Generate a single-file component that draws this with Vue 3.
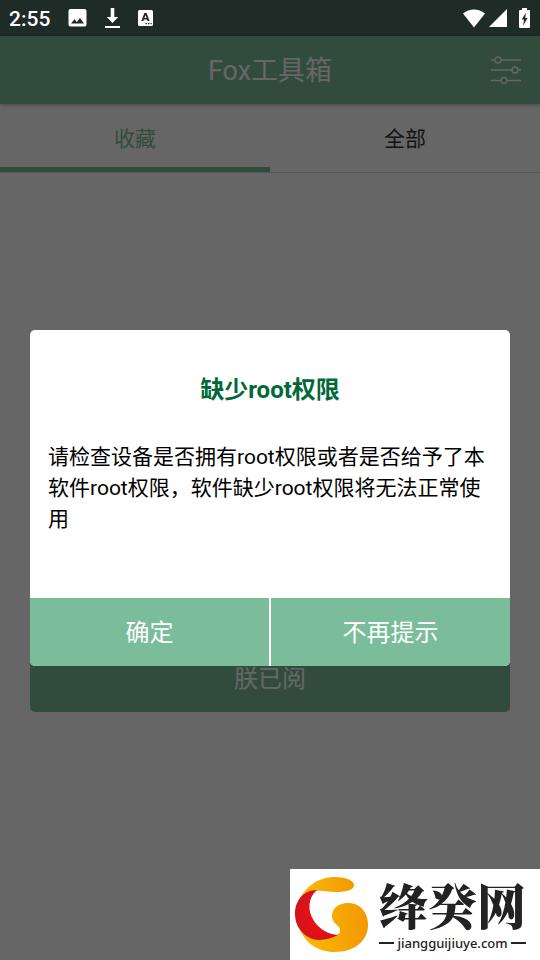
<template>
  <div class="screen">
    <div class="status-bar">
      <span class="clock">2:55</span>
      <svg class="status-icon" width="19" height="18" viewBox="0 0 19 18" aria-hidden="true">
        <path fill="#fff" fill-rule="evenodd" d="M2.500 0h14a2 2 0 0 1 2 2v13.500a2 2 0 0 1-2 2h-14a2 2 0 0 1-2-2V2a2 2 0 0 1 2-2zM3 14.500h13l-4-5.500-3.200 4L6.500 10.300z" />
      </svg>
      <svg class="status-icon" width="17" height="21" viewBox="0 0 17 21" aria-hidden="true">
        <path fill="#fff" d="M6.700 0h3.600v9h4L8.500 15 2.700 9h4zM1 18h15v2H1z" />
      </svg>
      <svg class="status-icon" width="16" height="18" viewBox="0 0 16 18" aria-hidden="true">
        <rect x="0" y="1" width="15" height="16" rx="1.500" fill="#fff" />
        <path fill="#1f2b26" fill-rule="evenodd" d="M6.400 4h2.200l3 8h-2L9 10.400H5.900L5.300 12h-2zM7.500 6.200 6.400 9h2.200zM7.500 14H9v1.300H7.500zM10 14h1.500v1.300H10zM12.500 14h1.200v1.300h-1.200z" />
      </svg>
      <span class="spacer"></span>
      <svg width="22" height="19" viewBox="0 0 22 19" aria-hidden="true">
        <path fill="#fff" d="M11 18.500 0 4.500C6.500-1 15.500-1 22 4.500z" />
      </svg>
      <svg class="signal" width="18" height="18" viewBox="0 0 18 18" aria-hidden="true">
        <path fill="#fff" d="M18 0v18H0z" />
      </svg>
      <svg width="11" height="20" viewBox="0 0 11 20" aria-hidden="true">
        <path fill="#fff" d="M3 0h5v2h2q1 0 1 1v16q0 1-1 1H1q-1 0-1-1V3q0-1 1-1h2z" />
        <path fill="#1f2b26" d="M7 4.500 2.700 11.500H5L4.200 17.500 8.600 10H6.200z" />
      </svg>
    </div>

    <div class="content">
      <header class="toolbar">
        <h1>Fox工具箱</h1>
        <button class="settings" type="button" aria-label="设置">
          <svg width="32" height="28" viewBox="0 0 32 28" fill="none" stroke="currentColor" stroke-width="1.300">
            <path d="M1 4h4M11 4h20M1 14h21M28 14h3M1 24.500h10M17 24.500h14" />
            <circle cx="8" cy="4" r="3" />
            <circle cx="25" cy="14" r="3" />
            <circle cx="14" cy="24.500" r="3" />
          </svg>
        </button>
      </header>

      <nav class="tabs">
        <button
          v-for="tab in tabs"
          :key="tab"
          type="button"
          class="tab"
          :class="{ active: tab === activeTab }"
          @click="activeTab = tab"
        >{{ tab }}</button>
      </nav>

      <div class="layer">
        <section class="notice">
          <button type="button" class="action">朕已阅</button>
        </section>
      </div>

      <div class="layer scrim">
        <section class="dialog" role="alertdialog" aria-labelledby="dialog-title" aria-describedby="dialog-text">
          <h2 id="dialog-title">缺少root权限</h2>
          <p id="dialog-text">请检查设备是否拥有root权限或者是否给予了本软件root权限，软件缺少root权限将无法正常使用</p>
          <div class="actions">
            <button type="button" class="action">确定</button>
            <button type="button" class="action">不再提示</button>
          </div>
        </section>
      </div>
    </div>

    <aside class="brand">
      <svg width="76" height="78" viewBox="0 0 76 78" aria-hidden="true">
        <defs>
          <linearGradient id="brand-gold" x1="0" x2="1">
            <stop offset="0" stop-color="#f9bd08" />
            <stop offset="1" stop-color="#f39800" />
          </linearGradient>
          <radialGradient id="brand-red" cx=".6" cy=".5" r=".6">
            <stop offset="0" stop-color="#f80d0d" />
            <stop offset="1" stop-color="#d0131e" />
          </radialGradient>
        </defs>
        <path fill="url(#brand-gold)" d="M4 27C11 9 26 1 41 1c12 0 19 4 19 8 0 5-8 7-18 7-8 0-14-2-20-1C14 16 8 20 4 27z" />
        <path fill="url(#brand-gold)" d="M5 51c9 12 24 15 35 9 5-2 6-2 6-6 0-5-8-6-8-14 0-8 7-13 16-13 12 0 20 9 20 22 0 16-14 27-33 27C23 76 10 66 5 51z" />
        <path fill="url(#brand-red)" d="M23 14C14 21 13 35 20 45c6 9 14 13 24 14-9 5-22 7-30 2C5 55 1 47 1 38 1 25 9 14 23 14z" />
      </svg>
      <div class="brand-text">
        <strong>绛癸网</strong>
        <span class="brand-url">jiangguijiuye.com</span>
      </div>
    </aside>
  </div>
</template>

<script setup>
import { ref } from 'vue'

const tabs = ['收藏', '全部']
const activeTab = ref('收藏')
</script>

<style>
body {
  margin: 0;
  background: #ffffff;
}
</style>

<style scoped>
.screen {
  display: flex;
  flex-direction: column;
  min-height: 100vh;
  font-family: Roboto, "Noto Sans CJK SC", sans-serif;
  color: #000000;
}

button {
  margin: 0;
  padding: 0;
  border: 0;
  background: none;
  font: inherit;
  color: inherit;
  cursor: pointer;
}

svg {
  display: block;
  flex: none;
}

.status-bar {
  display: flex;
  align-items: center;
  height: 36px;
  box-sizing: border-box;
  padding: 0 10px 0 9px;
  background: #1f2b26;
  color: #ffffff;
}

.clock {
  padding-top: 2px;
  font-size: 21px;
  font-weight: 500;
}

.status-icon {
  margin-left: 17px;
}

.clock + .status-icon {
  margin-left: 18px;
}

.spacer {
  flex: 1;
}

.signal {
  margin: 0 12px 0 4px;
}

.content {
  position: relative;
  display: flex;
  flex: 1;
  flex-direction: column;
}

.toolbar {
  display: grid;
  grid-template-columns: 1fr auto 1fr;
  align-items: center;
  height: 68px;
  padding: 0 18px;
  background: #7bbd9a;
  box-shadow: 0 1px 4px rgba(0, 0, 0, 0.3);
  color: #ffffff;
}

.toolbar h1 {
  grid-column: 2;
  margin: 0;
  padding-bottom: 3px;
  font-size: 27px;
  font-weight: 400;
}

.settings {
  justify-self: end;
}

.tabs {
  display: flex;
  border-bottom: 1px solid #d8d8d8;
}

.tab {
  flex: 1;
  height: 68px;
  padding-bottom: 2px;
  border-top: 5px solid transparent;
  border-bottom: 5px solid transparent;
  color: #333333;
  font-size: 21px;
}

.tab.active {
  border-bottom-color: #7bbd9a;
  color: #7bbd9a;
}

.layer {
  position: absolute;
  inset: 0;
  display: flex;
  align-items: center;
  padding: 0 30px;
}

.scrim {
  background: rgba(0, 0, 0, 0.6);
}

.notice {
  display: flex;
  flex: 1;
  flex-direction: column;
  justify-content: flex-end;
  min-height: 428px;
  overflow: hidden;
  border-radius: 5px;
}

.action {
  height: 68px;
  padding-bottom: 4px;
  background: #7bbd9a;
  color: #ffffff;
  font-size: 24px;
}

.dialog {
  flex: 1;
  overflow: hidden;
  border-radius: 5px;
  background: #ffffff;
}

.dialog h2 {
  margin: 0;
  padding: 43px 18px 35px;
  color: #006837;
  font-size: 24px;
  line-height: 34px;
  font-weight: 700;
  text-align: center;
}

.dialog p {
  margin: 0;
  padding: 0 18px 63px;
  font-size: 21px;
  line-height: 31px;
}

.actions {
  display: flex;
  gap: 2px;
}

.actions .action {
  flex: 1;
}

.brand {
  position: fixed;
  right: 0;
  bottom: 0;
  display: flex;
  align-items: center;
  gap: 9px;
  width: 250px;
  height: 91px;
  box-sizing: border-box;
  padding: 0 14px 0 4px;
  background: #ffffff;
  color: #222222;
}

.brand-text {
  flex: 1;
}

.brand strong {
  display: block;
  height: 56px;
  font-family: "Noto Serif CJK SC", "Noto Sans CJK SC", serif;
  font-size: 49px;
  line-height: 52px;
  font-weight: 900;
  white-space: nowrap;
}

.brand-url {
  display: flex;
  align-items: center;
  gap: 3px;
  font-family: "Noto Sans", sans-serif;
  font-size: 13px;
  line-height: 18px;
  font-weight: 500;
}

.brand-url::before,
.brand-url::after {
  content: "";
  flex: 1;
  height: 2px;
  background: #222222;
}
</style>
